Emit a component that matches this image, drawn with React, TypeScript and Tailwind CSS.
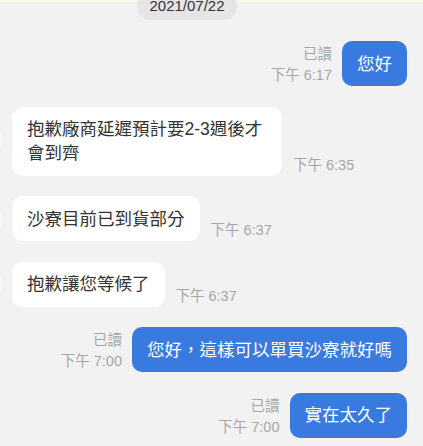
import React from "react";

const font = { fontFamily: '"Liberation Sans", "Noto Sans CJK TC", sans-serif' };

function Left({ text, time }: { text: string; time: string }) {
  return (
    <div className="flex items-end">
      <div className="w-[34px] h-[34px] rounded-full bg-[#f6f6f6] ml-[-31px] mr-[9px] self-center shrink-0" />
      <div className="bg-white rounded-[11px] px-[15px] py-[10.5px] max-w-[270px] text-[17.5px] leading-[24px] text-[#333333]">
        {text}
      </div>
      <div className="ml-[11px] text-[14.5px] leading-[21px] text-[#a6a6a6] whitespace-nowrap">{time}</div>
    </div>
  );
}

function Right({ text, time }: { text: string; time: string }) {
  return (
    <div className="flex items-end justify-end pr-[16px]">
      <div className="mr-[10px] text-[14.5px] leading-[21px] text-[#a6a6a6] text-right whitespace-nowrap">
        <div>已讀</div>
        <div>{time}</div>
      </div>
      <div className="bg-[#387adf] rounded-[10px] px-[15px] py-[10.5px] text-[17.5px] leading-[24px] text-white whitespace-nowrap">
        {text}
      </div>
    </div>
  );
}

export default function App() {
  return (
    <div className="w-[423px] h-[446px] overflow-hidden bg-[#f2f2f2]" style={font}>
      <div className="h-[2px] bg-[#fffbea]" />
      <div className="flex -mt-[10px] pl-[137px]">
        <div className="w-[100px] h-[28px] rounded-full bg-[#e5e5e5] text-[15px] text-[#333333] flex items-center justify-center">
          2021/07/22
        </div>
      </div>
      <div className="flex flex-col gap-[20.5px] mt-[21px]">
        <Right text="您好" time="下午 6:17" />
        <Left text="抱歉廠商延遲預計要2-3週後才會到齊" time="下午 6:35" />
        <Left text="沙寮目前已到貨部分" time="下午 6:37" />
        <Left text="抱歉讓您等候了" time="下午 6:37" />
        <Right text="您好，這樣可以單買沙寮就好嗎" time="下午 7:00" />
        <Right text="實在太久了" time="下午 7:00" />
      </div>
    </div>
  );
}
